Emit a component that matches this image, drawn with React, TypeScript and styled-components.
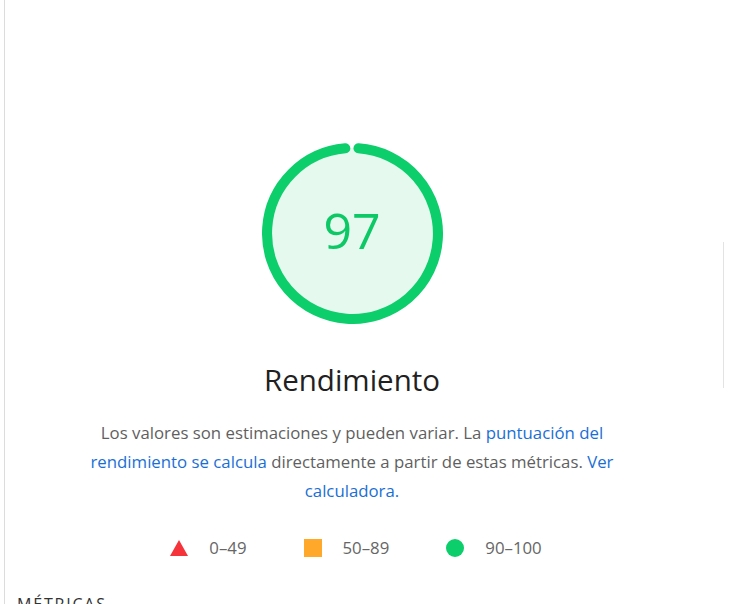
import React from "react";
import styled, { createGlobalStyle } from "styled-components";

const GlobalStyle = createGlobalStyle`
  html, body {
    margin: 0;
    padding: 0;
    background: #ffffff;
    overflow: hidden;
  }
  body {
    font-family: "Open Sans", "Noto Sans", Arial, sans-serif;
    color: #212121;
  }
`;

const Page = styled.div`
  display: flex;
  flex-direction: row;
  width: 733px;
  height: 604px;
  overflow: hidden;
`;

const Main = styled.main`
  width: 695px;
  margin-left: 4px;
  border-left: 1px solid #dcdcdc;
  display: flex;
  flex-direction: column;
  align-items: center;
  padding-top: 143px;
  box-sizing: border-box;
`;

const Side = styled.aside`
  flex: 1;
  display: flex;
  flex-direction: column;
  padding-left: 24px;
`;

const SideRule = styled.div`
  margin-top: 242px;
  width: 1px;
  height: 146px;
  background: #e3e3e3;
`;

const Gauge = styled.div`
  display: grid;
  width: 181px;
  height: 181px;
  & > * {
    grid-area: 1 / 1;
  }
`;

const GaugeSvg = styled.svg`
  width: 181px;
  height: 181px;
  display: block;
`;

const Score = styled.div`
  align-self: center;
  justify-self: center;
  font-size: 50px;
  line-height: 1;
  color: #0cc865;
  margin-top: -8px;
`;

const Title = styled.h2`
  margin: 37px 0 0;
  font-size: 29.5px;
  font-weight: 400;
  line-height: 38px;
  color: #212121;
`;

const Description = styled.p`
  margin: 19px 0 0;
  width: 545px;
  font-size: 16.8px;
  line-height: 29px;
  color: #5f5f5f;
  text-align: center;
`;

const Link = styled.a`
  color: #1a6fd6;
  text-decoration: none;
`;

const Legend = styled.div`
  display: flex;
  align-items: center;
  gap: 57px;
  margin-top: 32px;
  margin-left: 8px;
`;

const LegendItem = styled.div`
  display: flex;
  align-items: center;
  gap: 21px;
  font-size: 16.8px;
  color: #666666;
  line-height: 22px;
`;

const Shape = styled.span<{ $kind: "fail" | "average" | "pass" }>`
  display: inline-block;
  width: 18px;
  height: 18px;
  ${(p) =>
    p.$kind === "fail"
      ? `
    width: 0; height: 0;
    border-left: 9px solid transparent;
    border-right: 9px solid transparent;
    border-bottom: 16px solid #f4333a;
  `
      : p.$kind === "average"
      ? `
    background: #ffa829;
  `
      : `
    background: #0cce6b;
    border-radius: 50%;
  `}
`;

const SectionHeading = styled.h3`
  align-self: flex-start;
  margin: 35px 0 0 12px;
  font-size: 16px;
  font-weight: 400;
  letter-spacing: 1.8px;
  text-transform: uppercase;
  color: #333333;
  line-height: 20px;
`;

const R = 85;
const C = 2 * Math.PI * R;
const ARC = C - 14;

export default function App() {
  return (
    <>
      <GlobalStyle />
      <Page>
        <Main>
          <Gauge>
            <GaugeSvg viewBox="0 0 180 180">
              <circle cx="90" cy="90" r={R} fill="#e6f9ef" />
              <circle
                cx="90"
                cy="90"
                r={R}
                fill="none"
                stroke="#0cce6b"
                strokeWidth="10"
                strokeLinecap="round"
                strokeDasharray={`${ARC} ${C}`}
                transform="rotate(-86 90 90)"
              />
            </GaugeSvg>
            <Score>97</Score>
          </Gauge>
          <Title>Rendimiento</Title>
          <Description>
            Los valores son estimaciones y pueden variar. La{" "}
            <Link href="#">puntuación del rendimiento se calcula</Link> directamente a
            partir de estas métricas. <Link href="#">Ver calculadora.</Link>
          </Description>
          <Legend>
            <LegendItem>
              <Shape $kind="fail" />
              <span>0–49</span>
            </LegendItem>
            <LegendItem>
              <Shape $kind="average" />
              <span>50–89</span>
            </LegendItem>
            <LegendItem>
              <Shape $kind="pass" />
              <span>90–100</span>
            </LegendItem>
          </Legend>
          <SectionHeading>Métricas</SectionHeading>
        </Main>
        <Side>
          <SideRule />
        </Side>
      </Page>
    </>
  );
}
